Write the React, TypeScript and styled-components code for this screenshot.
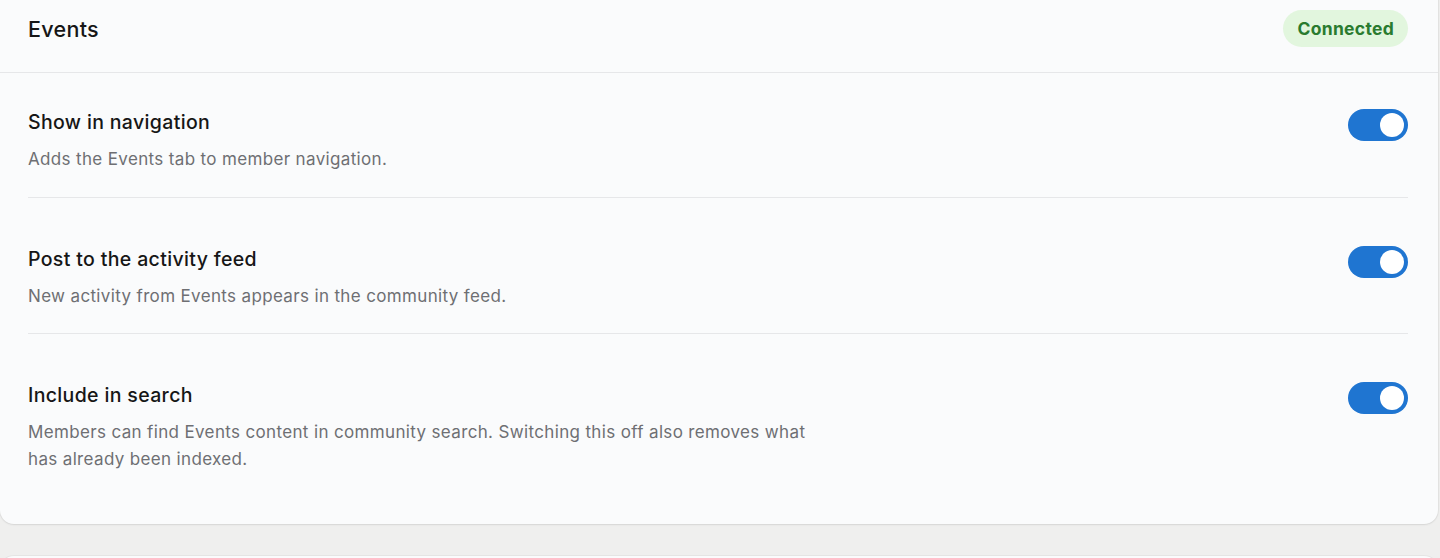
import React from "react";
import styled, { createGlobalStyle } from "styled-components";

const Global = createGlobalStyle`
  html, body { margin: 0; padding: 0; }
  body {
    background: #efefee;
    font-family: Inter, "Noto Sans", "Liberation Sans", sans-serif;
    -webkit-font-smoothing: antialiased;
    overflow: hidden;
  }
`;

const Page = styled.div`
  display: flex;
  flex-direction: column;
  gap: 32px;
  padding-right: 2px;
`;

const Card = styled.section`
  background: #fafbfc;
  border-radius: 14px;
  box-shadow: 0 1px 2px rgba(0, 0, 0, 0.08), 0 0 0 1px rgba(0, 0, 0, 0.03);
  margin-top: -16px;
`;

const NextCard = styled.section`
  background: #fafbfc;
  border-radius: 14px;
  height: 40px;
  box-shadow: 0 0 0 1px rgba(0, 0, 0, 0.04);
`;

const Header = styled.header`
  display: flex;
  align-items: center;
  justify-content: space-between;
  padding: 26px 30px 25px 28px;
  border-bottom: 1px solid #e6e7e9;
`;

const Title = styled.h2`
  margin: 0;
  font-size: 21.5px;
  font-weight: 500;
  color: #161616;
  letter-spacing: 0.3px;
  line-height: 28px;
`;

const Badge = styled.span`
  display: inline-flex;
  align-items: center;
  height: 37px;
  padding: 0 14px;
  border-radius: 999px;
  background: #e2f6de;
  color: #2a7b2f;
  font-size: 17.5px;
  font-weight: 700;
  letter-spacing: 0.3px;
`;

const List = styled.div`
  padding: 0 30px 28px 28px;
`;

const Row = styled.div`
  display: flex;
  align-items: flex-start;
  justify-content: space-between;
  padding: 36px 0 24px;
  & + & {
    border-top: 1px solid #e6e7e9;
    padding-top: 48px;
  }
`;

const Text = styled.div`
  display: flex;
  flex-direction: column;
  gap: 11px;
  max-width: 792px;
`;

const RowTitle = styled.div`
  font-size: 19.5px;
  line-height: 26px;
  font-weight: 500;
  color: #161616;
  letter-spacing: 0.35px;
`;

const RowDesc = styled.div`
  font-size: 17px;
  line-height: 26.5px;
  color: #6e6f73;
  letter-spacing: 0.35px;
`;

const Switch = styled.button<{ $on: boolean }>`
  flex: none;
  position: relative;
  width: 60px;
  height: 32px;
  border: none;
  padding: 0;
  border-radius: 16px;
  background: ${(p) => (p.$on ? "#1f75d1" : "#c9cbd0")};
  cursor: pointer;
  &::after {
    content: "";
    position: absolute;
    top: 4px;
    left: ${(p) => (p.$on ? "32px" : "4px")};
    width: 24px;
    height: 24px;
    border-radius: 50%;
    background: #ffffff;
  }
`;

const rows = [
  { title: "Show in navigation", desc: "Adds the Events tab to member navigation." },
  { title: "Post to the activity feed", desc: "New activity from Events appears in the community feed." },
  {
    title: "Include in search",
    desc: "Members can find Events content in community search. Switching this off also removes what has already been indexed.",
  },
];

export default function App() {
  const [state, setState] = React.useState([true, true, true]);
  return (
    <>
      <Global />
      <Page>
        <Card>
          <Header>
            <Title>Events</Title>
            <Badge>Connected</Badge>
          </Header>
          <List>
            {rows.map((r, i) => (
              <Row key={r.title}>
                <Text>
                  <RowTitle>{r.title}</RowTitle>
                  <RowDesc>{r.desc}</RowDesc>
                </Text>
                <Switch
                  $on={state[i]}
                  aria-label={r.title}
                  onClick={() => setState((s) => s.map((v, j) => (j === i ? !v : v)))}
                />
              </Row>
            ))}
          </List>
        </Card>
        <NextCard />
      </Page>
    </>
  );
}
